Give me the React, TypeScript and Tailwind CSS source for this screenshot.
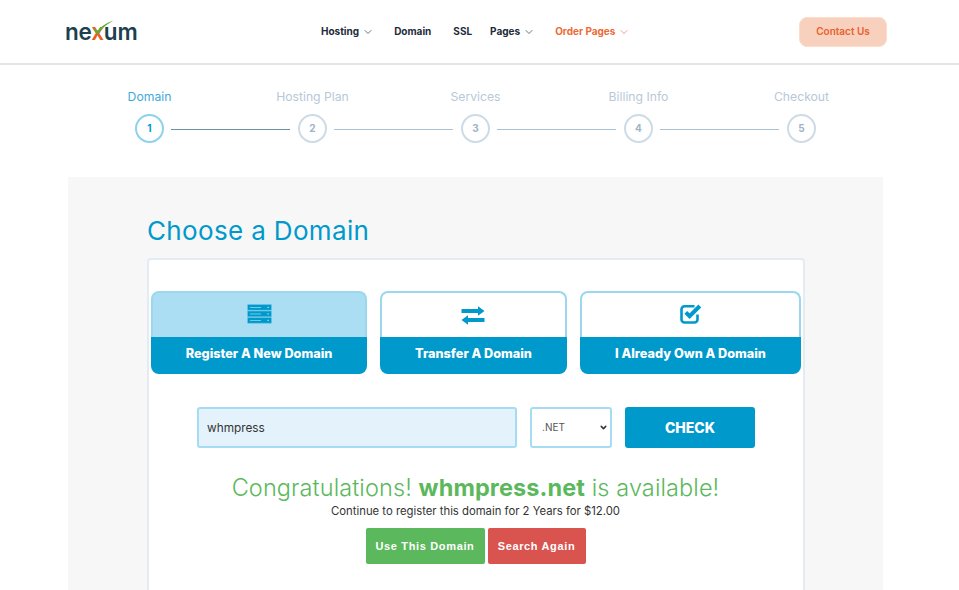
import { ChevronDown } from "lucide-react";

const sans = "font-['Inter','Liberation_Sans',sans-serif]";

function NavItem({ label, caret, className }: { label: string; caret?: boolean; className?: string }) {
  return (
    <a className={`flex items-center gap-[3px] text-[10px] font-bold ${className ?? "text-[#1d2b3a]"}`}>
      {label}
      {caret && <ChevronDown size={12} strokeWidth={1.3} />}
    </a>
  );
}

function ServerIcon() {
  return (
    <svg className="-mt-[3px]" width="25" height="20" viewBox="0 0 25 20">
      {[0.5, 7, 13.5].map((y) => (
        <g key={y}>
          <rect x="0.5" y={y} width="24" height="5.8" rx="0.6" fill="#0099cc" stroke="#6cc6e6" strokeWidth="0.6" />
          <rect x="3" y={y + 2.5} width="11" height="0.9" fill="#7fd0ea" />
          <rect x="20.5" y={y + 2.3} width="1.2" height="1.2" fill="#bfe8f5" />
        </g>
      ))}
    </svg>
  );
}

function ExchangeIcon() {
  return (
    <svg className="mr-[2px]" width="24" height="19" viewBox="0 0 24 19" fill="#0099cc">
      <path d="M0.5 3H17V0.2L23.5 5L17 9.8V7H0.5Z" />
      <path d="M23.5 12H7V9.2L0.5 14L7 18.8V16H23.5Z" />
    </svg>
  );
}

function CheckBoxIcon() {
  return (
    <svg className="-mt-[2px]" width="22" height="20" viewBox="0 0 22 20" fill="none" stroke="#0099cc">
      <path d="M14.5 2.2H4.5A3 3 0 0 0 1.5 5.2V15.5A3 3 0 0 0 4.5 18.5H14.5A3 3 0 0 0 17.5 15.5V10.5" strokeWidth="2.6" />
      <path d="M5.8 8.4L9.6 12.2L19.8 2" strokeWidth="4" strokeLinejoin="miter" />
    </svg>
  );
}

function Step({ n, active, last }: { n: number; active?: boolean; last?: boolean }) {
  return (
    <>
      <div
        className={`flex h-[29px] w-[29px] shrink-0 items-center justify-center rounded-full border-2 bg-white text-[10px] font-bold ${
          active ? "border-[#8dd2ec] text-[#0099cc]" : "border-[#cddbe7] text-[#a0b4c6]"
        }`}
      >
        {n}
      </div>
      {!last && <div className={`ml-[7px] mr-[8px] mt-[2px] h-px w-[119px] ${active ? "bg-[#6f8fa3]" : "bg-[#a9c1d4]"}`} />}
    </>
  );
}

function Tab({ label, icon, active, className }: { label: string; icon: React.ReactNode; active?: boolean; className: string }) {
  return (
    <div className={`flex h-[83px] flex-col ${className}`}>
      <div className={`flex h-[46px] items-center justify-center rounded-t-lg border-2 border-b-0 border-[#9bd8f0] ${active ? "bg-[#abdef2]" : "bg-white"}`}>{icon}</div>
      <div className="flex flex-1 items-center justify-center rounded-b-lg bg-[#0099cc] pb-[3px] text-[12.7px] font-extrabold text-white">{label}</div>
    </div>
  );
}

export default function App() {
  return (
    <div className={`h-[590px] w-[959px] overflow-hidden bg-white ${sans}`}>
      <header className="flex h-[65px] items-center border-b-2 border-[#e4e4e4] pl-[65px] pr-[72px]">
        <div className="relative mt-[2px] w-[71px] text-[22.5px] font-semibold leading-none tracking-[-0.2px] text-[#1b4150]">
          ne<span className="text-[#ec5b24]">x</span>um
          <svg className="absolute left-[27px] top-[-1px]" width="22" height="16" viewBox="0 0 22 16">
            <path d="M0.5 8 L6 15 C9 9 15 4 21.5 0.5 C14 3 9 6.5 6 10.5 Z" fill="#5fae32" />
          </svg>
        </div>
        <nav className="ml-[185px] flex items-center">
          <NavItem label="Hosting" caret />
          <NavItem label="Domain" className="ml-[20px] text-[#1d2b3a]" />
          <NavItem label="SSL" className="ml-[22px] text-[#1d2b3a]" />
          <NavItem label="Pages" caret className="ml-[18px] text-[#1d2b3a]" />
          <NavItem label="Order Pages" caret className="ml-[20px] text-[#ec6a35]" />
        </nav>
        <button className="ml-auto h-[30px] w-[88px] rounded-lg border border-[#fbdccd] bg-[#f8d0be] text-[10px] font-semibold text-[#e8622c]">
          Contact Us
        </button>
      </header>

      <section className="ml-[68px] w-[815px] pt-[24px]">
        <div className="grid grid-cols-5 text-center text-[12.2px] leading-4 text-[#b7c8d6]">
          <span className="text-[#3fa9d8]">Domain</span>
          <span>Hosting Plan</span>
          <span>Services</span>
          <span>Billing Info</span>
          <span>Checkout</span>
        </div>
        <div className="mt-[9px] flex items-center pl-[67px]">
          <Step n={1} active />
          <Step n={2} />
          <Step n={3} />
          <Step n={4} />
          <Step n={5} last />
        </div>
      </section>

      <main className="ml-[68px] mt-[34px] h-[500px] w-[815px] bg-[#f7f7f7] pl-[79px] pt-[38px]">
        <h1 className="text-[26px] font-normal leading-8 tracking-[0.35px] text-[#0099cc]">Choose a Domain</h1>
        <div className="mt-[11px] h-[400px] w-[658px] rounded border-2 border-[#e3ecf5] bg-white pl-[2px] pt-[31px]">
          <div className="flex gap-[13px]">
            <Tab className="w-[216px]" label="Register A New Domain" active icon={<ServerIcon />} />
            <Tab className="w-[187px]" label="Transfer A Domain" icon={<ExchangeIcon />} />
            <Tab className="w-[221px]" label="I Already Own A Domain" icon={<CheckBoxIcon />} />
          </div>

          <form className="ml-[46px] mt-[33px] flex gap-[13px]">
            <input
              readOnly
              value="whmpress"
              className="h-[41px] w-[320px] rounded-[3px] border-2 border-[#a6dcf3] bg-[#e3f2fb] px-[8px] text-[11.8px] text-[#333]"
            />
            <div className="relative">
              <select className="h-[41px] w-[82px] appearance-none rounded-[3px] border-2 border-[#a6dcf3] bg-white px-[10px] text-[10px] text-[#555]">
                <option>.NET</option>
              </select>
              <ChevronDown className="absolute right-[4px] top-[16px] text-[#333]" size={9} strokeWidth={4} />
            </div>
            <button type="button" className="h-[41px] w-[130px] rounded-[3px] bg-[#0099cc] text-[14px] font-extrabold text-white">
              CHECK
            </button>
          </form>

          <div className="mr-[3px] mt-[24px] text-center">
            <p className="text-[23.5px] font-light leading-8 tracking-[0.1px] text-[#5cb85c]">
              Congratulations! <b className="font-bold">whmpress.net</b> is available!
            </p>
            <p className="text-[11.3px] leading-[15px] text-[#333]">Continue to register this domain for 2 Years for $12.00</p>
            <div className="mt-[9px] flex justify-center gap-[3px] font-['Liberation_Sans',sans-serif] text-[11px] font-bold tracking-[0.65px] text-white">
              <button className="h-9 w-[119px] rounded-[2px] bg-[#5cb85c]">Use This Domain</button>
              <button className="h-9 w-[98px] rounded-[2px] bg-[#d9534f]">Search Again</button>
            </div>
          </div>
        </div>
      </main>
    </div>
  );
}
